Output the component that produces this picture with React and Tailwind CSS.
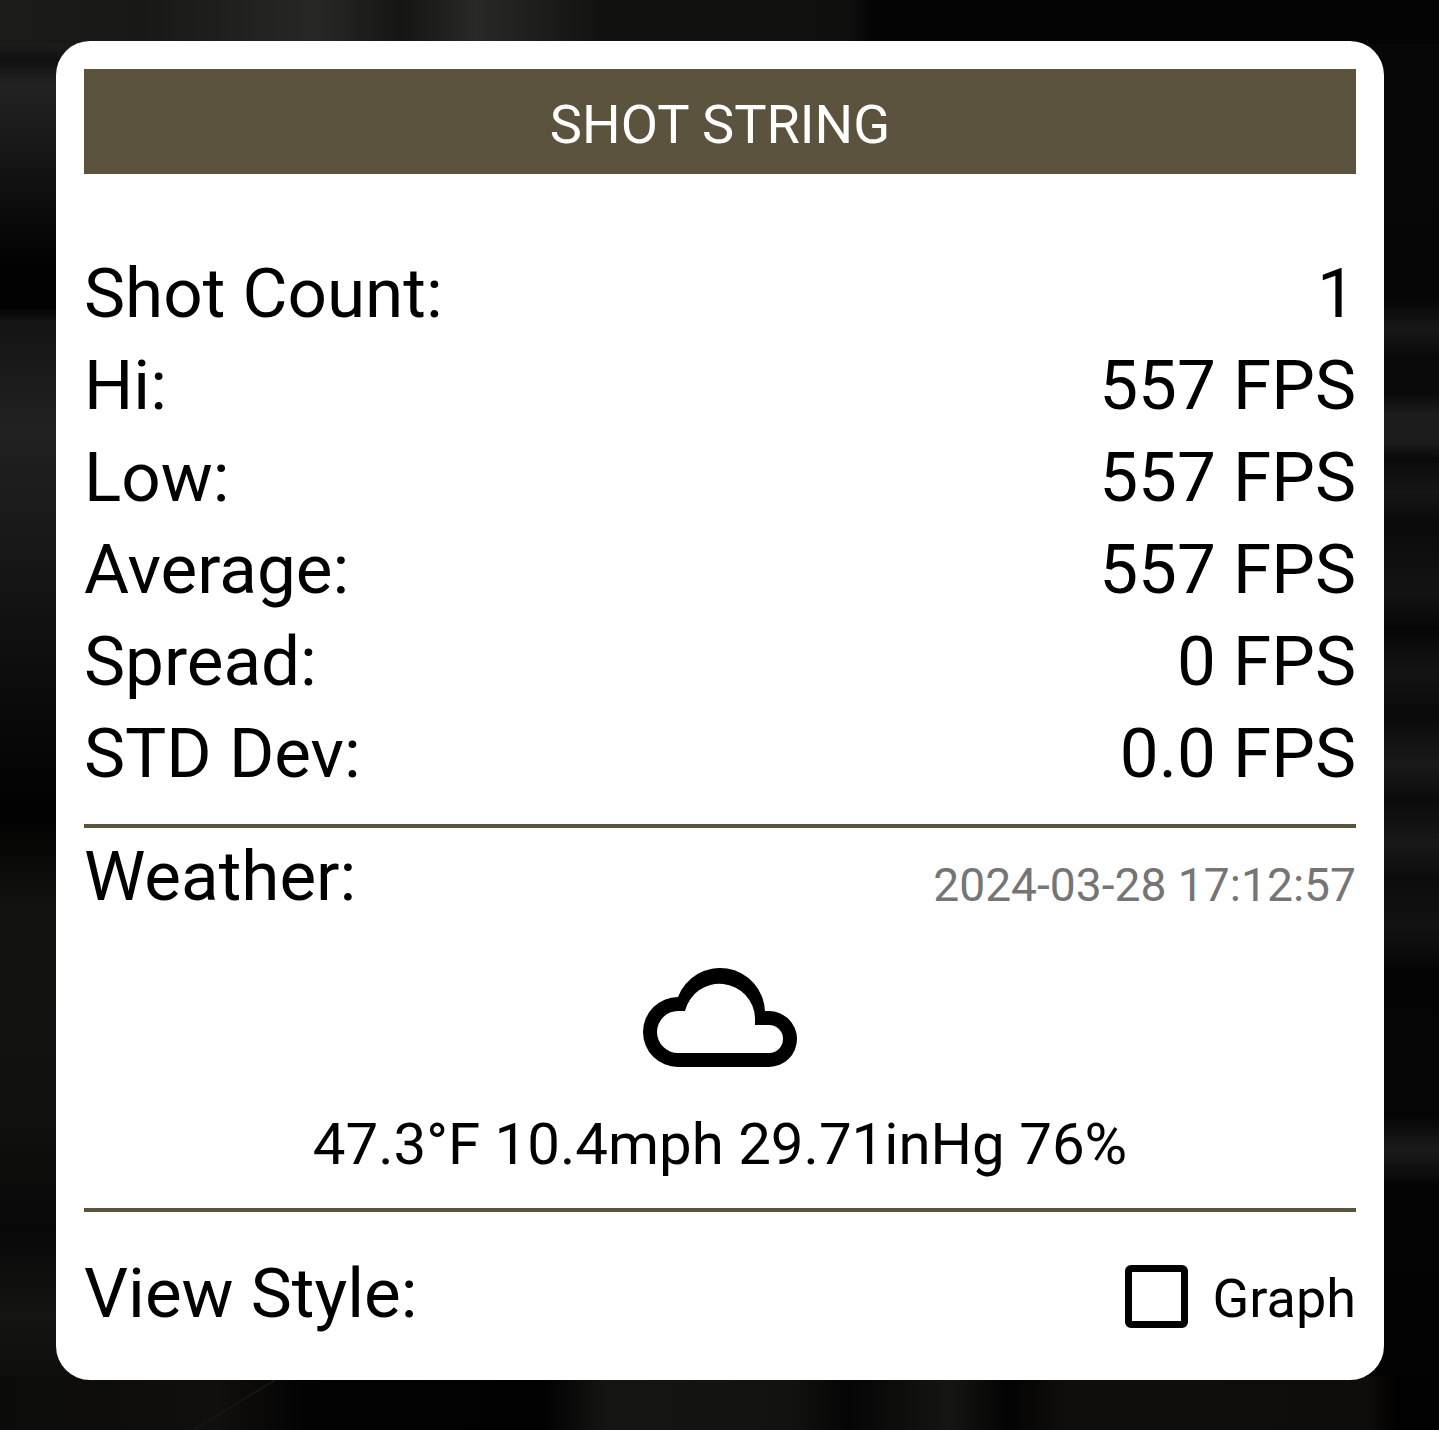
const stats = [
  ["Shot Count:", "1"],
  ["Hi:", "557 FPS"],
  ["Low:", "557 FPS"],
  ["Average:", "557 FPS"],
  ["Spread:", "0 FPS"],
  ["STD Dev:", "0.0 FPS"],
];

// the photo behind the card is only ever seen as four thin strips, so each strip gets its own gradient
function Backdrop() {
  return (
    <svg className="absolute inset-0 h-full w-full" viewBox="0 0 1439 1430" preserveAspectRatio="none" aria-hidden="true">
      <defs>
        <linearGradient id="left" x1="0" y1="0" x2="0" y2="1">
          <stop offset="0" stopColor="#1e1e1d" />
          <stop offset="0.032" stopColor="#1c1c1b" />
          <stop offset="0.042" stopColor="#101010" />
          <stop offset="0.06" stopColor="#222222" />
          <stop offset="0.19" stopColor="#010101" />
          <stop offset="0.215" stopColor="#020202" />
          <stop offset="0.225" stopColor="#141414" />
          <stop offset="0.3" stopColor="#212121" />
          <stop offset="0.57" stopColor="#010101" />
          <stop offset="0.635" stopColor="#12120f" />
          <stop offset="0.77" stopColor="#11110f" />
          <stop offset="0.86" stopColor="#080808" />
          <stop offset="0.92" stopColor="#141412" />
          <stop offset="1" stopColor="#0a0a0a" />
        </linearGradient>
        <linearGradient id="right" x1="0" y1="0" x2="0" y2="1">
          <stop offset="0" stopColor="#070707" />
          <stop offset="0.21" stopColor="#060606" />
          <stop offset="0.23" stopColor="#171717" />
          <stop offset="0.25" stopColor="#090909" />
          <stop offset="0.275" stopColor="#0a0a0a" />
          <stop offset="0.29" stopColor="#1c1c1c" />
          <stop offset="0.31" stopColor="#1a1a1a" />
          <stop offset="0.32" stopColor="#0a0a0a" />
          <stop offset="0.345" stopColor="#161616" />
          <stop offset="0.365" stopColor="#0a0a0a" />
          <stop offset="0.415" stopColor="#131313" />
          <stop offset="0.44" stopColor="#060606" />
          <stop offset="0.47" stopColor="#141414" />
          <stop offset="0.5" stopColor="#0a0a0a" />
          <stop offset="0.535" stopColor="#191919" />
          <stop offset="0.56" stopColor="#0b0b0b" />
          <stop offset="0.59" stopColor="#181818" />
          <stop offset="0.615" stopColor="#0c0c0c" />
          <stop offset="0.65" stopColor="#121212" />
          <stop offset="0.68" stopColor="#040404" />
          <stop offset="0.78" stopColor="#050505" />
          <stop offset="0.805" stopColor="#1b1b1b" />
          <stop offset="0.83" stopColor="#040404" />
          <stop offset="1" stopColor="#020202" />
        </linearGradient>
        <linearGradient id="top" x1="0" y1="0" x2="1" y2="0">
          <stop offset="0" stopColor="#1b1b1a" />
          <stop offset="0.1" stopColor="#181817" />
          <stop offset="0.22" stopColor="#272726" />
          <stop offset="0.28" stopColor="#151513" />
          <stop offset="0.33" stopColor="#282827" />
          <stop offset="0.42" stopColor="#111110" />
          <stop offset="0.59" stopColor="#0f0f0e" />
          <stop offset="0.605" stopColor="#040404" />
          <stop offset="1" stopColor="#040404" />
        </linearGradient>
        <linearGradient id="bottom" x1="0" y1="0" x2="1" y2="0">
          <stop offset="0" stopColor="#0b0b0a" />
          <stop offset="0.15" stopColor="#100f0d" />
          <stop offset="0.21" stopColor="#030303" />
          <stop offset="0.38" stopColor="#020202" />
          <stop offset="0.42" stopColor="#141412" />
          <stop offset="0.55" stopColor="#12120f" />
          <stop offset="0.59" stopColor="#050505" />
          <stop offset="0.66" stopColor="#151513" />
          <stop offset="0.7" stopColor="#030303" />
          <stop offset="0.74" stopColor="#0f0e0c" />
          <stop offset="0.95" stopColor="#0e0d0b" />
          <stop offset="0.97" stopColor="#010101" />
          <stop offset="1" stopColor="#010101" />
        </linearGradient>
      </defs>
      <rect width="1439" height="1430" fill="url(#left)" />
      <rect x="1360" width="79" height="1430" fill="url(#right)" />
      <rect width="1439" height="44" fill="url(#top)" />
      <rect y="1376" width="1439" height="54" fill="url(#bottom)" />
      <path d="M193 1430L275 1380" stroke="#151512" strokeWidth="2" fill="none" />
    </svg>
  );
}

function CloudIcon() {
  return (
    <svg className="h-[99px] w-[154px]" viewBox="0 0 154 99" aria-hidden="true">
      <path
        fillRule="evenodd"
        d="M35 99H126A28 28 0 0 0 126 43H122A45 45 0 0 0 35 29A35 35 0 0 0 35 99ZM35 85H126A14 14 0 0 0 126 57H112V50A35.5 35.5 0 0 0 42 43H35A21 21 0 0 0 35 85Z"
      />
    </svg>
  );
}

export default function App() {
  return (
    <div className="relative h-[1430px] overflow-hidden bg-black pl-14 pr-[55px] pt-[41px] font-['Roboto',sans-serif] text-black">
      <Backdrop />
      <main className="relative h-[1339px] rounded-[34px] bg-white p-7">
        <h1 className="flex h-[105px] items-center justify-center bg-[#5c533f] pt-1.5 text-[54.2px] font-normal text-white">SHOT STRING</h1>

        <dl className="mt-[74px]">
          {stats.map(([label, value]) => (
            <div key={label} className="flex h-[92px] items-center justify-between text-[69.2px]">
              <dt>{label}</dt>
              <dd>{value}</dd>
            </div>
          ))}
        </dl>

        <div className="mt-6 border-t-4 border-[#5c533f]">
          <div className="flex h-[98px] items-center justify-between">
            <span className="text-[69.2px]">Weather:</span>
            <span className="mt-[18px] text-[46.2px] text-[#757575]">2024-03-28 17:12:57</span>
          </div>
          <div className="mt-[42px] flex justify-center">
            <CloudIcon />
          </div>
          <p className="mt-[43px] text-center text-[58.2px] leading-[68px]">47.3°F 10.4mph 29.71inHg 76%</p>
        </div>

        <div className="mt-[30px] flex h-[170px] items-start justify-between border-t-4 border-[#5c533f] pt-9">
          <span className="text-[69.2px] leading-[92px]">View Style:</span>
          <label className="mt-0.5 flex h-[92px] items-center gap-[25px]">
            <span className="size-[63px] rounded-md border-[7px] border-black" />
            <span className="mt-1 text-[54px]">Graph</span>
          </label>
        </div>
      </main>
    </div>
  );
}
